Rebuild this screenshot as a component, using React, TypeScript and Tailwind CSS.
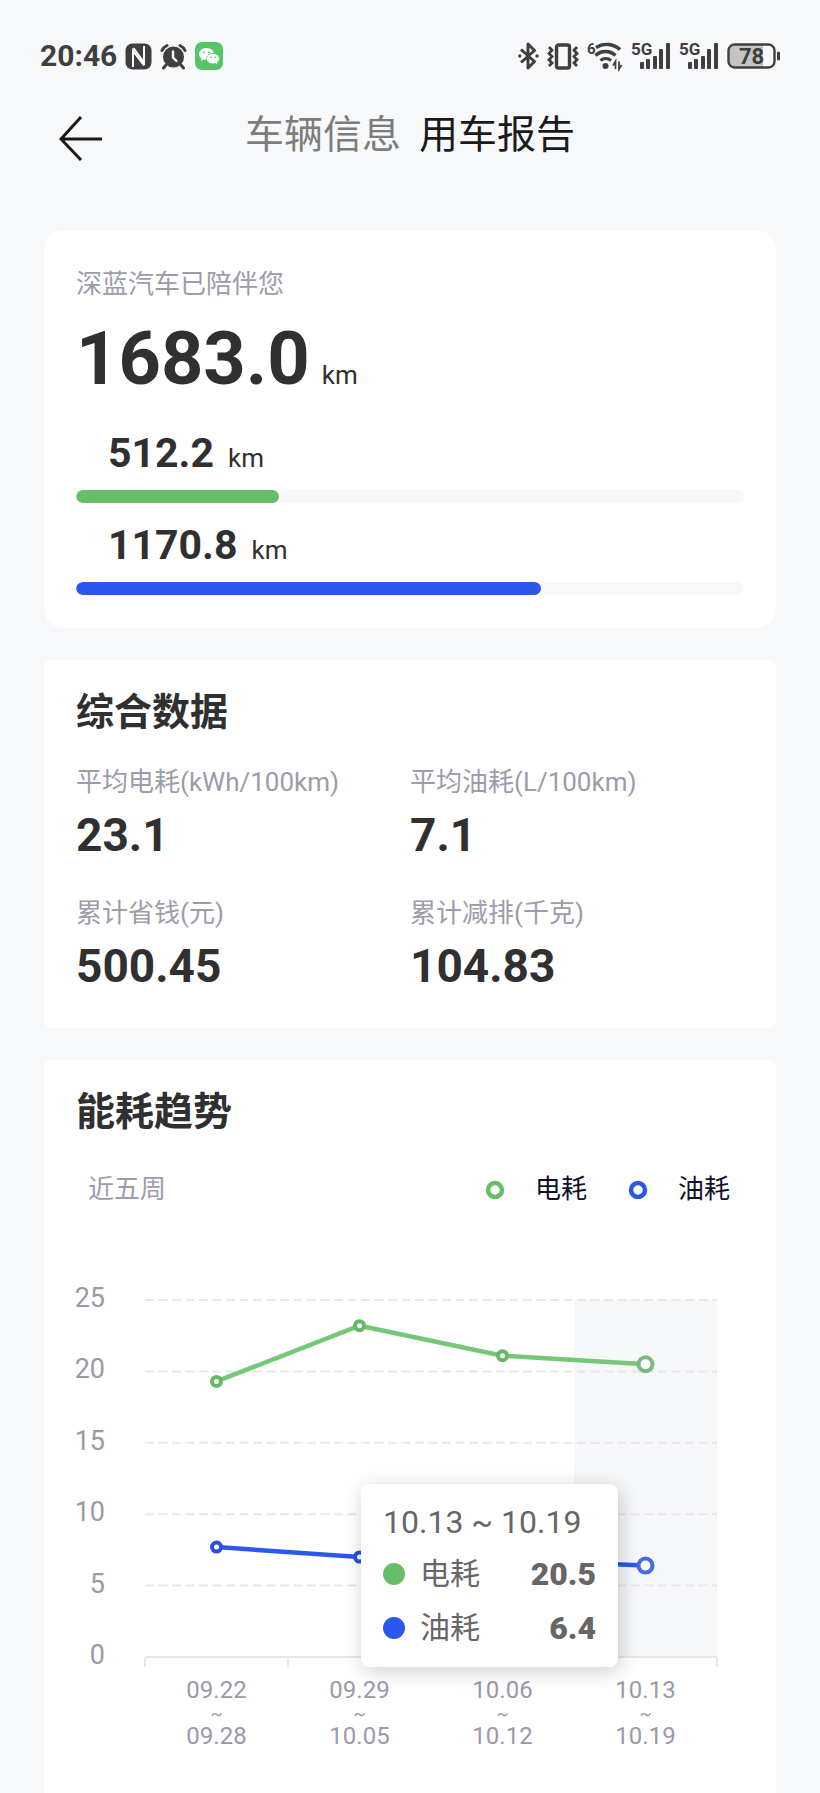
import { Fragment } from "react";

const COLORS = {
    electric: "#68bd69",
    fuel: "#2b57ec",
};

const distances = [
    { label: "电耗里程", value: "512.2", percent: 30.4, bar: "bg-[#68bd69]" },
    { label: "油耗里程", value: "1170.8", percent: 69.6, bar: "bg-[#2b57ec]" },
];

const stats = [
    { label: "平均电耗(kWh/100km)", value: "23.1" },
    { label: "平均油耗(L/100km)", value: "7.1" },
    { label: "累计省钱(元)", value: "500.45" },
    { label: "累计减排(千克)", value: "104.83" },
];

const weeks = [
    { from: "09.22", to: "09.28", electric: 19.3, fuel: 7.7 },
    { from: "09.29", to: "10.05", electric: 23.2, fuel: 7.0 },
    { from: "10.06", to: "10.12", electric: 21.1, fuel: 6.8 },
    { from: "10.13", to: "10.19", electric: 20.5, fuel: 6.4 },
];

const PLOT = { left: 69, right: 641, top: 40, bottom: 397, max: 25 };
const COLUMN = (PLOT.right - PLOT.left) / weeks.length;

const xAt = (i: number) => PLOT.left + COLUMN * (i + 0.5);
const yAt = (value: number) =>
    PLOT.bottom - ((PLOT.bottom - PLOT.top) * value) / PLOT.max;

function NfcIcon() {
    return (
        <svg width="27" height="27" viewBox="0 0 27 27">
            <rect x="0.5" y="0.5" width="26" height="26" rx="7" fill="#3f3f3f" />
            <path
                d="M8 24V8l11 14.500M19 3v16.500L8.500 5"
                fill="none"
                stroke="#f7f8fa"
                strokeWidth="2"
            />
        </svg>
    );
}

function AlarmIcon() {
    return (
        <svg width="27" height="27" viewBox="0 0 27 27" fill="none" strokeLinecap="round">
            <circle cx="13.5" cy="14" r="10.5" fill="#3f3f3f" />
            <path
                d="M2 7.5a10 10 0 0 1 5-5M25 7.5a10 10 0 0 0-5-5M6 22l-2.5 3M21 22l2.5 3"
                stroke="#3f3f3f"
                strokeWidth="3"
            />
            <path d="M13 8.500v6l3.500 3.500" stroke="#f7f8fa" strokeWidth="2.400" />
        </svg>
    );
}

function WechatIcon() {
    return (
        <svg width="28" height="28" viewBox="0 0 28 28">
            <rect width="28" height="28" rx="7" fill="#56c568" />
            <path
                d="M11.5 6C7.2 6 4 8.7 4 12.100c0 1.900 1 3.500 2.600 4.600L6 19l2.700-1.400c.9.2 1.800.4 2.800.4 4.200 0 7.500-2.600 7.500-6S15.700 6 11.500 6z"
                fill="#fff"
            />
            <path
                d="M18 11.500c-3.700 0-6.500 2.300-6.500 5.200s2.800 5.200 6.500 5.200c.8 0 1.600-.1 2.300-.3l2.300 1.200-.5-2c1.500-1 2.400-2.400 2.400-4.100 0-2.900-2.800-5.200-6.500-5.200z"
                fill="#fff"
                stroke="#56c568"
                strokeWidth="0.8"
            />
            <g fill="#56c568">
                <circle cx="9" cy="10.500" r="1" />
                <circle cx="14" cy="10.500" r="1" />
                <circle cx="16" cy="15.300" r="0.900" />
                <circle cx="20.300" cy="15.300" r="0.900" />
            </g>
        </svg>
    );
}

function BluetoothIcon() {
    return (
        <svg width="21" height="28" viewBox="0 0 21 28" fill="none" stroke="#3f3f3f" strokeWidth="3">
            <path d="M3 7.500l13.500 12-6.500 6.500V2l6.500 6.500L3 20.500" strokeLinejoin="round" />
            <circle cx="1.800" cy="14" r="1.700" fill="#3f3f3f" stroke="none" />
            <circle cx="19" cy="14" r="1.700" fill="#3f3f3f" stroke="none" />
        </svg>
    );
}

function VibrateIcon() {
    return (
        <svg width="32" height="27" viewBox="0 0 32 27" fill="none" stroke="#3f3f3f">
            <rect x="9.500" y="2" width="13" height="23" rx="2" strokeWidth="3.400" />
            <path
                d="M2 4l3 3.200-3 3.200 3 3.200-3 3.200 3 3.200-3 3M30 4l-3 3.200 3 3.200-3 3.200 3 3.200-3 3.200 3 3"
                strokeWidth="2.800"
            />
        </svg>
    );
}

function WifiIcon() {
    return (
        <svg width="36" height="28" viewBox="0 0 36 28" fill="none" stroke="#3f3f3f" overflow="visible">
            <text x="0" y="12" fontSize="15" fontWeight="700" fill="#3f3f3f" stroke="none">
                6
            </text>
            <path d="M9 5.500a20 20 0 0 1 24 2" strokeWidth="3.400" />
            <path d="M8.500 13.500a14.500 14.500 0 0 1 20 0" strokeWidth="3.400" />
            <path d="M13.500 18.500a8 8 0 0 1 10.500 0" strokeWidth="3" />
            <circle cx="18.500" cy="24" r="3" fill="#3f3f3f" stroke="none" />
            <path d="M28.500 27v-7.500l-2.500 4M32 19.500V27l2.500-4" strokeWidth="1.800" />
        </svg>
    );
}

function SignalIcon() {
    return (
        <svg width="40" height="28" viewBox="0 0 40 28" fill="#3f3f3f" overflow="visible">
            <text x="0" y="13" fontSize="17" fontWeight="700">
                5G
            </text>
            <rect x="9" y="20" width="4" height="7" rx="1" />
            <rect x="15" y="17" width="4" height="10" rx="1" />
            <rect x="22" y="14" width="4" height="13" rx="1" />
            <rect x="28" y="7" width="4" height="20" rx="1" />
            <rect x="35" y="1" width="4" height="26" rx="1" />
        </svg>
    );
}

function BatteryIcon() {
    return (
        <svg width="54" height="28" viewBox="0 0 54 28">
            <rect x="1.500" y="2.500" width="46" height="23" rx="6" fill="#f7f8fa" />
            <path d="M7.500 2.500H36v23H7.500a6 6 0 0 1-6-6v-11a6 6 0 0 1 6-6z" fill="#c4c4c4" />
            <rect
                x="1.500"
                y="2.500"
                width="46"
                height="23"
                rx="6"
                fill="none"
                stroke="#3f3f3f"
                strokeWidth="2.400"
            />
            <rect x="50" y="9.500" width="3" height="9" rx="1.500" fill="#3f3f3f" />
            <text x="24.500" y="22" fontSize="22" fontWeight="700" textAnchor="middle" fill="#3f3f3f">
                78
            </text>
        </svg>
    );
}

function StatusBar() {
    return (
        <div className="flex h-18 items-end justify-between pt-10 pr-[39px] pl-10">
            <div className="flex h-8 items-center gap-2">
                <span className="text-[30px] leading-8 font-bold text-[#3f3f3f]">20:46</span>
                <NfcIcon />
                <AlarmIcon />
                <WechatIcon />
            </div>
            <div className="flex h-8 items-center gap-2">
                <BluetoothIcon />
                <VibrateIcon />
                <WifiIcon />
                <SignalIcon />
                <SignalIcon />
                <BatteryIcon />
            </div>
        </div>
    );
}

function Header() {
    return (
        <header className="flex h-[132px] items-center px-[59px]">
            <button type="button" aria-label="返回" className="w-11 shrink-0">
                <svg width="44" height="46" viewBox="0 0 44 46" fill="none" stroke="#1a1a1a" strokeWidth="3">
                    <path d="M22 2L2 24l20 21M2 24h41" />
                </svg>
            </button>
            <nav className="flex flex-1 justify-center gap-[18px] pr-11 pb-1.5 text-[39px] leading-12">
                <a href="#info" className="text-[#7c7c7c]">
                    车辆信息
                </a>
                <a href="#report" aria-current="page" className="text-[#1a1a1a]">
                    用车报告
                </a>
            </nav>
        </header>
    );
}

function MileageCard() {
    return (
        <section className="rounded-[20px] bg-white px-8 pt-9 pb-[33px]">
            <p className="text-[26px] leading-9 text-[#9c9cab]">深蓝汽车已陪伴您</p>
            <p className="mt-[17px] flex items-baseline gap-3">
                <span className="text-[74px] leading-20 font-bold">1683.0</span>
                <span className="text-[26px] leading-9">km</span>
            </p>
            {distances.map((item, i) => (
                <div key={item.label} className={i === 0 ? "mt-[30px]" : "mt-[18px]"}>
                    <p className="flex items-baseline gap-3.5 pl-8">
                        <span className="text-[41px] leading-12 font-bold">{item.value}</span>
                        <span className="text-[26px] leading-9">km</span>
                    </p>
                    <div
                        role="progressbar"
                        aria-label={item.label}
                        aria-valuenow={item.percent}
                        className="mt-[13px] h-[13px] overflow-hidden rounded-full bg-[#f7f8fa]"
                    >
                        <div
                            className={`h-full rounded-full ${item.bar}`}
                            style={{ width: `${item.percent}%` }}
                        />
                    </div>
                </div>
            ))}
        </section>
    );
}

function StatsCard() {
    return (
        <section className="rounded-lg bg-white px-8 pt-7 pb-9">
            <h2 className="text-[38px] leading-12 font-bold">综合数据</h2>
            <dl className="mt-7 grid grid-cols-2 gap-y-[34px]">
                {stats.map((item) => (
                    <div key={item.label}>
                        <dt className="text-[26px] leading-9 text-[#9c9cab]">{item.label}</dt>
                        <dd className="mt-[9px] text-[46px] leading-[52px] font-bold">{item.value}</dd>
                    </div>
                ))}
            </dl>
        </section>
    );
}

function Legend({ color, label }: { color: string; label: string }) {
    return (
        <span className="flex items-center gap-[30px]">
            <svg width="20" height="20" viewBox="0 0 20 20">
                <circle cx="10" cy="11" r="7" fill="#fff" stroke={color} strokeWidth="4.500" />
            </svg>
            {label}
        </span>
    );
}

function Chart() {
    const last = weeks.length - 1;
    const points = (key: "electric" | "fuel") =>
        weeks.map((week, i) => `${xAt(i)},${yAt(week[key])}`).join(" ");

    return (
        <svg viewBox="0 0 668 520" className="w-full" role="img" aria-label="近五周能耗趋势">
            <rect
                x={xAt(last) - COLUMN / 2}
                y={PLOT.top}
                width={COLUMN}
                height={PLOT.bottom - PLOT.top}
                fill="#f6f7f9"
            />
            {[25, 20, 15, 10, 5, 0].map((tick) => (
                <Fragment key={tick}>
                    <text x="29" y={yAt(tick) + 7} textAnchor="end" fontSize="27" fill="#9a9aa6">
                        {tick}
                    </text>
                    <line
                        x1={PLOT.left}
                        x2={PLOT.right}
                        y1={yAt(tick)}
                        y2={yAt(tick)}
                        stroke="#e8e8ea"
                        strokeWidth="2"
                        strokeDasharray={tick === 0 ? undefined : "9 4.500"}
                    />
                </Fragment>
            ))}
            {[0, 1, 2, 3, 4].map((i) => (
                <line
                    key={i}
                    x1={PLOT.left + COLUMN * i}
                    x2={PLOT.left + COLUMN * i}
                    y1={PLOT.bottom}
                    y2={PLOT.bottom + 10}
                    stroke="#e8e8ea"
                    strokeWidth="2"
                />
            ))}
            {weeks.map((week, i) => (
                <g key={week.from} textAnchor="middle" fontSize="24" fill="#9a9aa6">
                    <text x={xAt(i)} y="438">
                        {week.from}
                    </text>
                    <text x={xAt(i)} y="460" fontSize="18">
                        ~
                    </text>
                    <text x={xAt(i)} y="484">
                        {week.to}
                    </text>
                </g>
            ))}
            <polyline points={points("electric")} fill="none" stroke="#76c878" strokeWidth="4.500" />
            <polyline points={points("fuel")} fill="none" stroke={COLORS.fuel} strokeWidth="4.500" />
            {weeks.map((week, i) => (
                <g key={week.from} fill="#fff" strokeWidth="4">
                    <circle
                        cx={xAt(i)}
                        cy={yAt(week.electric)}
                        r={i === last ? 7 : 4.5}
                        stroke={i === last ? "#7cba83" : "#67b768"}
                    />
                    <circle
                        cx={xAt(i)}
                        cy={yAt(week.fuel)}
                        r={i === last ? 7 : 4.5}
                        stroke={i === last ? "#476be0" : "#2b50dc"}
                    />
                </g>
            ))}
        </svg>
    );
}

function TooltipRow({ dot, label, value }: { dot: string; label: string; value: string }) {
    return (
        <div className="flex h-11 items-center">
            <span className={`size-[22px] rounded-full ${dot}`} />
            <span className="ml-[15px] text-[30px] leading-11">{label}</span>
            <span className="ml-auto text-[32px] leading-11 font-black">{value}</span>
        </div>
    );
}

function TrendCard() {
    return (
        <section className="flex-1 rounded-t-lg bg-white px-8 pt-7">
            <h2 className="text-[39px] leading-12 font-bold">能耗趋势</h2>
            <div className="mt-[35px] flex items-center justify-between pr-3.5 pl-3 text-[26px] leading-9">
                <span className="text-[#9c9cab]">近五周</span>
                <div className="flex gap-[41px] text-[#10102a]">
                    <Legend color={COLORS.electric} label="电耗" />
                    <Legend color={COLORS.fuel} label="油耗" />
                </div>
            </div>
            <div className="relative mt-[53px]">
                <Chart />
                <div className="absolute top-56 left-[285px] flex w-[257px] flex-col gap-2.5 rounded-lg bg-white px-[22px] pt-[18px] pb-[17px] text-[#666] shadow-[2px_4px_20px_rgba(0,0,0,0.2)]">
                    <p className="text-[32px] leading-10 whitespace-nowrap">10.13 ~ 10.19</p>
                    <TooltipRow dot="bg-[#68bd69]" label="电耗" value="20.5" />
                    <TooltipRow dot="bg-[#2b57ec]" label="油耗" value="6.4" />
                </div>
            </div>
        </section>
    );
}

export default function App() {
    return (
        <div className="flex min-h-screen flex-col bg-[#f7f8fa] font-['Roboto','Noto_Sans_CJK_SC',sans-serif] text-[#303030]">
            <StatusBar />
            <Header />
            <main className="flex flex-1 flex-col gap-8 px-11 pt-[26px]">
                <MileageCard />
                <StatsCard />
                <TrendCard />
            </main>
        </div>
    );
}
